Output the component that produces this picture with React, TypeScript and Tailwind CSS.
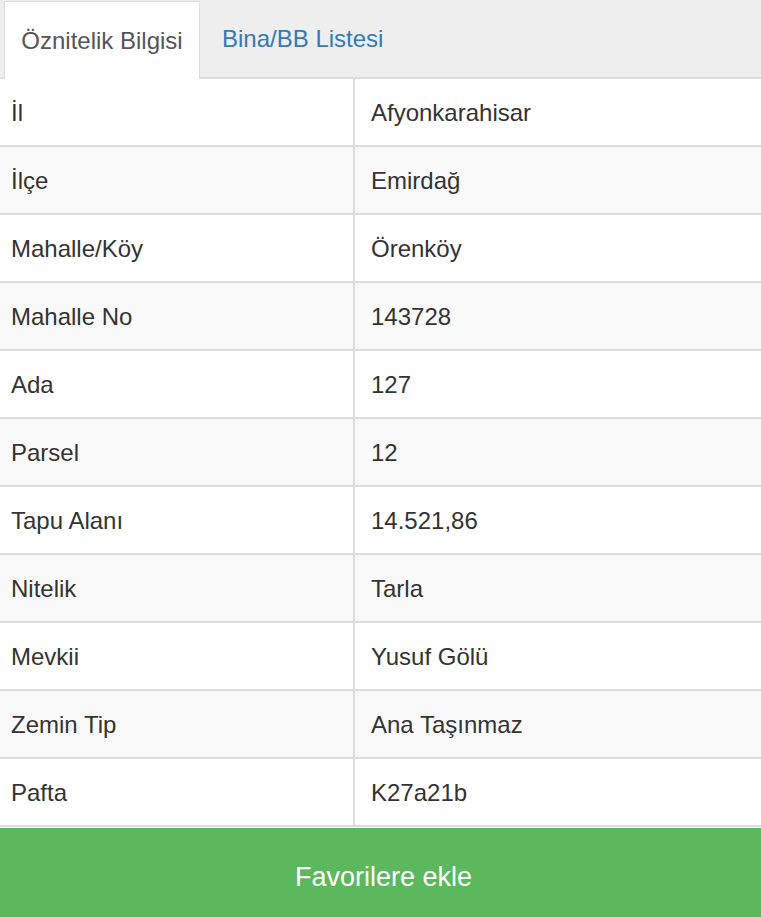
const rows: [string, string][] = [
  ['İl', 'Afyonkarahisar'],
  ['İlçe', 'Emirdağ'],
  ['Mahalle/Köy', 'Örenköy'],
  ['Mahalle No', '143728'],
  ['Ada', '127'],
  ['Parsel', '12'],
  ['Tapu Alanı', '14.521,86'],
  ['Nitelik', 'Tarla'],
  ['Mevkii', 'Yusuf Gölü'],
  ['Zemin Tip', 'Ana Taşınmaz'],
  ['Pafta', 'K27a21b'],
];

export default function App() {
  return (
    <div className="w-[761px] h-[917px] overflow-hidden bg-white text-[#333] font-['Liberation_Sans',Arial,sans-serif] flex flex-col">
      {/* tabs */}
      <div className="h-[79px] bg-[#eeeeee] border-b-2 border-[#dddddd] flex items-end pl-[4px] shrink-0">
        <div className="h-[78px] w-[196px] bg-white border border-[#dddddd] border-b-0 -mb-[2px] flex items-center justify-center text-[24px] text-[#555]">
          Öznitelik Bilgisi
        </div>
        <div className="h-[77px] flex items-center pl-[22px] text-[24px] text-[#337ab7]">Bina/BB Listesi</div>
      </div>

      {/* table */}
      <div className="flex flex-col">
        {rows.map(([k, v], i) => (
          <div
            key={k}
            className={`flex h-[68px] border-b-2 border-[#dddddd] ${i % 2 === 0 ? 'bg-white' : 'bg-[#f9f9f9]'}`}
          >
            <div className="w-[355px] shrink-0 border-r-2 border-[#dddddd] flex items-center pl-[11px] pt-[2px] text-[24px]">{k}</div>
            <div className="flex-1 flex items-center pl-[16px] pt-[2px] text-[24px]">{v}</div>
          </div>
        ))}
      </div>

      <button className="flex-1 mt-[1px] bg-[#5cb85c] text-white text-[27px] flex items-center justify-center pt-[10px] pl-[6px]">
        Favorilere ekle
      </button>
    </div>
  );
}
